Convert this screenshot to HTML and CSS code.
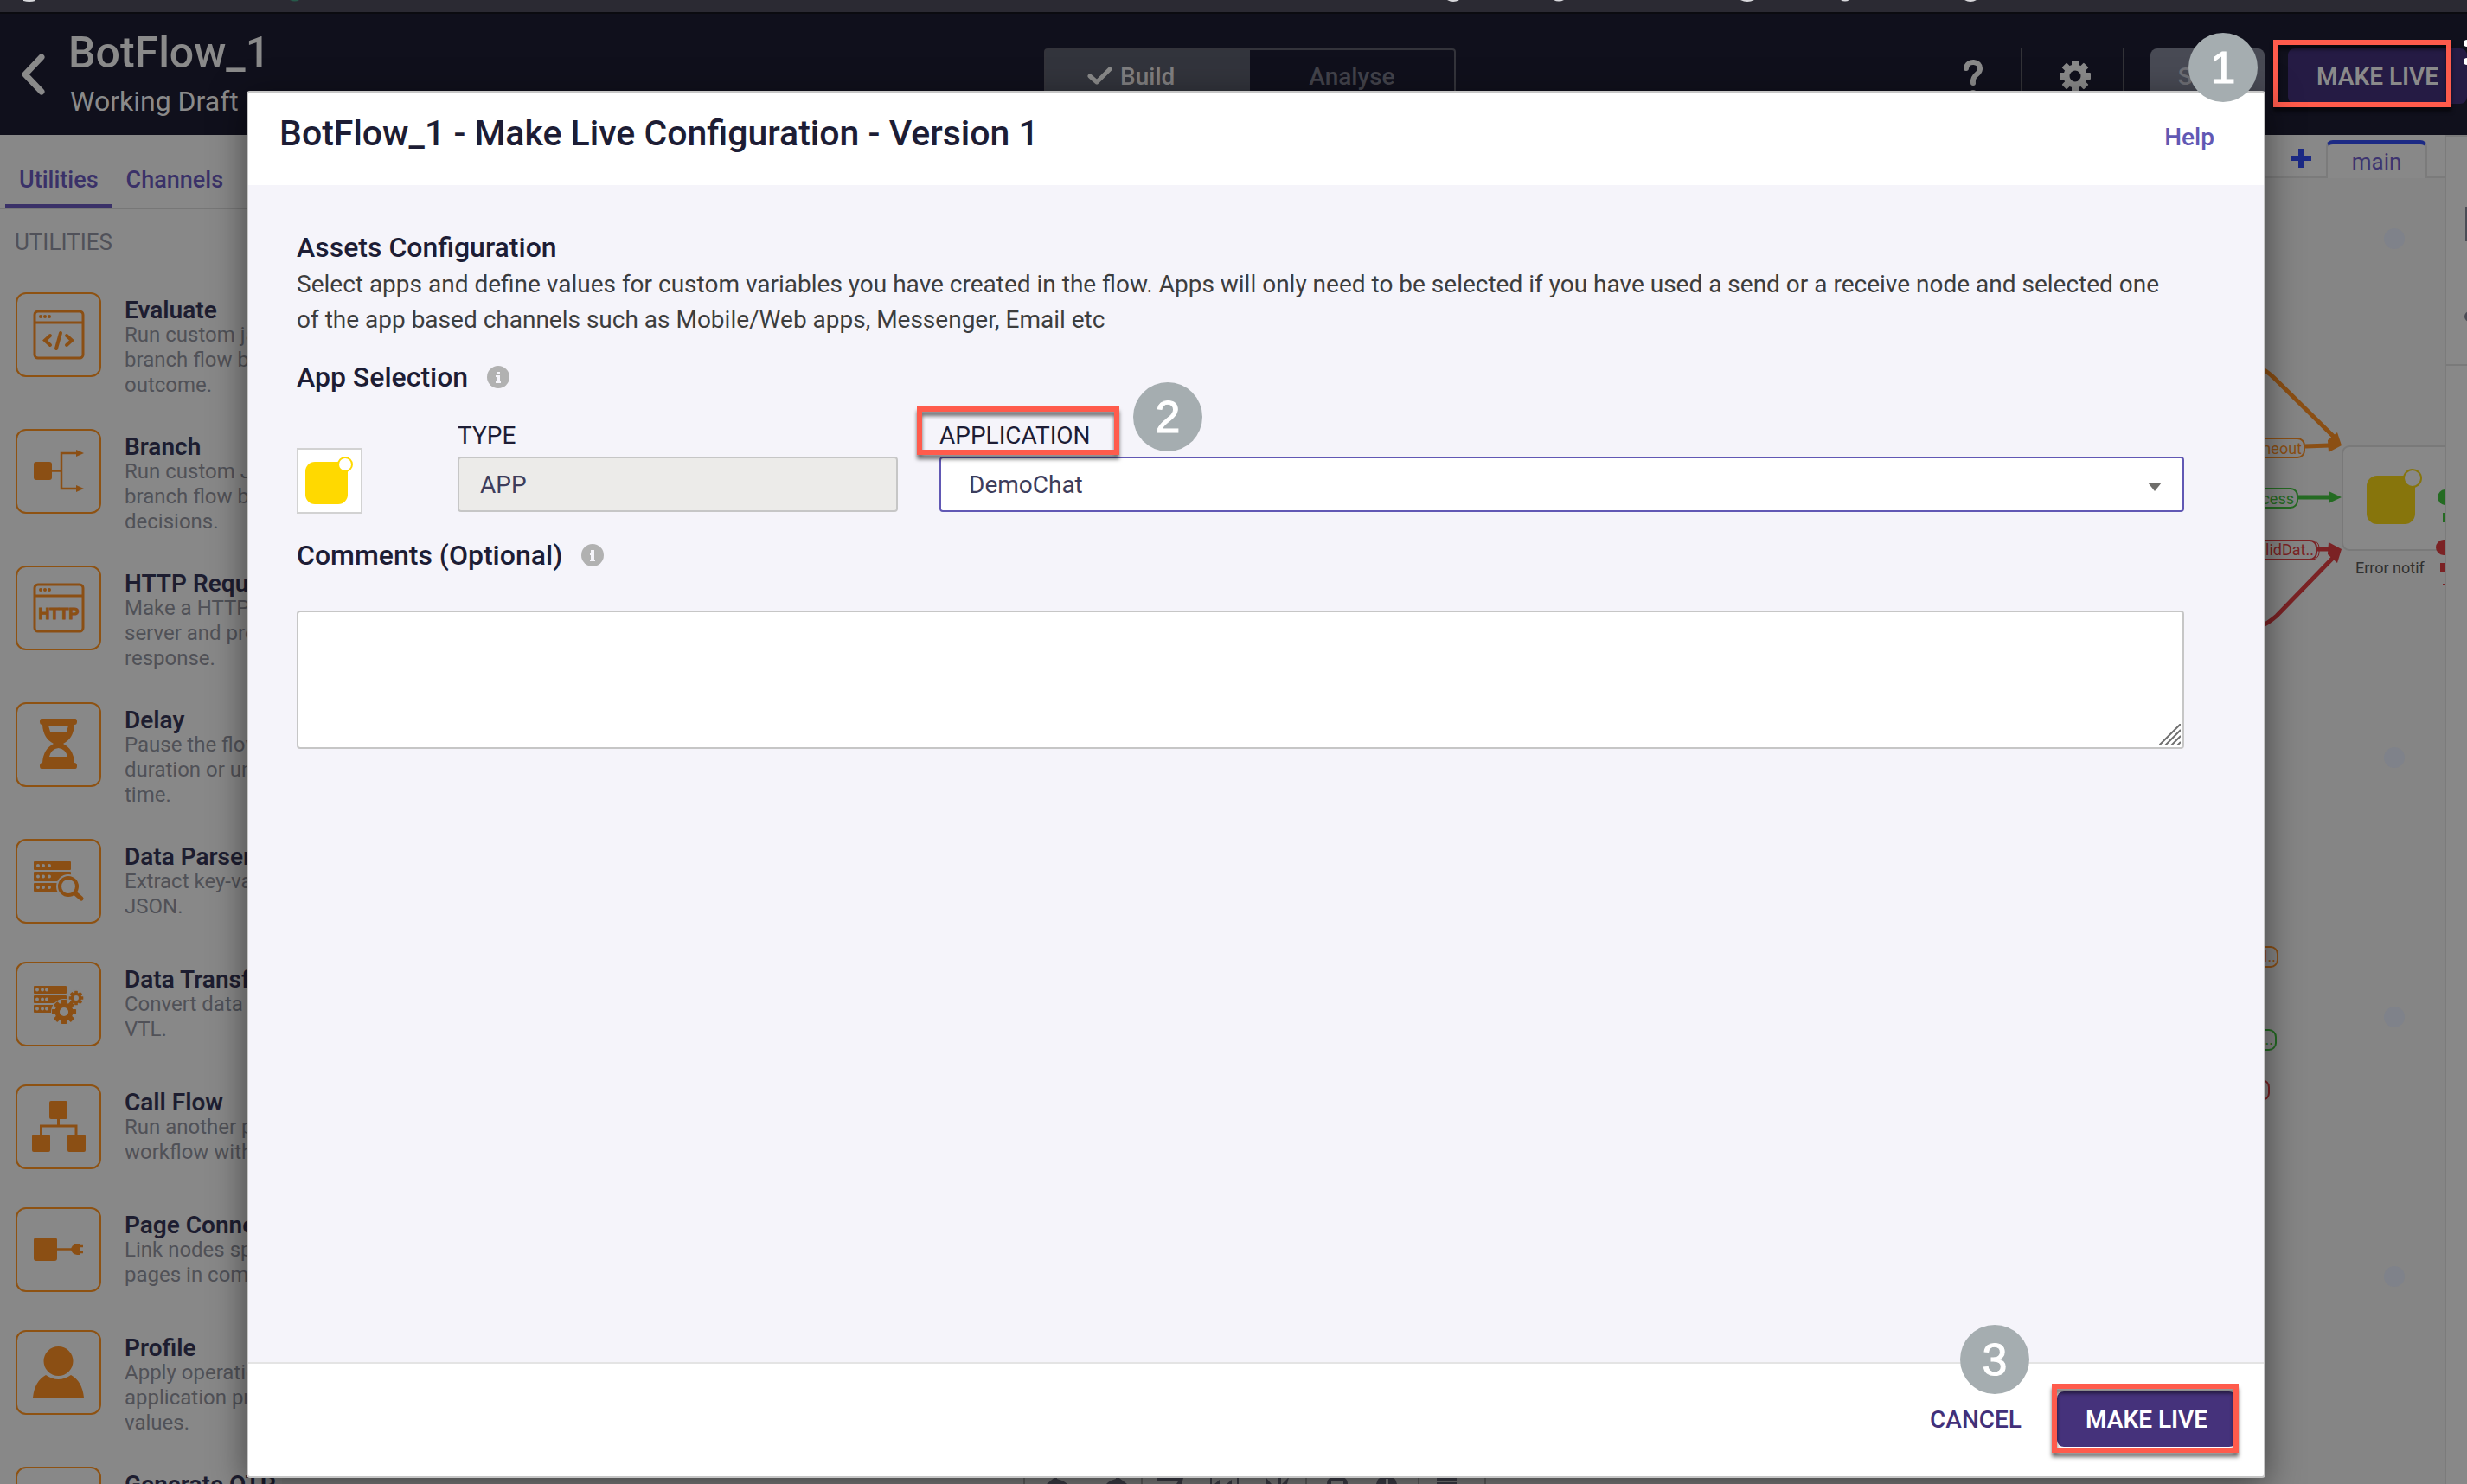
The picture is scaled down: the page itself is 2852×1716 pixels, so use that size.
FILE: index.html
```html
<!DOCTYPE html>
<html lang="en">
<head>
<meta charset="utf-8">
<meta name="viewport" content="width=device-width, initial-scale=1">
<title>BotFlow_1 - Make Live Configuration</title>
<link rel="stylesheet" href="styles.css">
</head>
<body>
<svg class="defs" aria-hidden="true">
  <defs>
    <g id="gear">
      <circle r="10" fill="none" stroke="currentColor" stroke-width="7"/>
      <g fill="currentColor">
        <rect x="-4" y="-18" width="8" height="7" rx="1"/>
        <rect x="-4" y="-18" width="8" height="7" rx="1" transform="rotate(45)"/>
        <rect x="-4" y="-18" width="8" height="7" rx="1" transform="rotate(90)"/>
        <rect x="-4" y="-18" width="8" height="7" rx="1" transform="rotate(135)"/>
        <rect x="-4" y="-18" width="8" height="7" rx="1" transform="rotate(180)"/>
        <rect x="-4" y="-18" width="8" height="7" rx="1" transform="rotate(225)"/>
        <rect x="-4" y="-18" width="8" height="7" rx="1" transform="rotate(270)"/>
        <rect x="-4" y="-18" width="8" height="7" rx="1" transform="rotate(315)"/>
      </g>
    </g>
    <g id="window">
      <rect x="22" y="22" width="56" height="54" rx="4" fill="none" stroke="currentColor" stroke-width="3"/>
      <path d="M22 35H78" stroke="currentColor" stroke-width="3"/>
      <g fill="currentColor"><circle cx="29" cy="28" r="2"/><circle cx="34" cy="28" r="2"/><circle cx="39" cy="28" r="2"/></g>
    </g>
    <g id="info">
      <circle cx="13" cy="13" r="13" fill="#b1b1b1"/>
      <path d="M11 7h4v3h-4zM10 11h5v7h1v2h-6v-2h1v-5h-1z" fill="#f5f4fa"/>
    </g>
  </defs>
</svg>

<div class="browser-edge">
  <svg class="edge-marks" viewBox="0 0 2852 14" preserveAspectRatio="xMinYMin" aria-hidden="true">
    <path d="M27 0h14v1q-7 2-14 0zM1673 0h14q-7 4-14 0zM1796 0h12q-6 3-12 0zM2012 0h16q-8 4-16 0zM2128 0h10q-5 3-10 0zM2271 0h14q-7 4-14 0z" fill="#d8d8dc"/>
    <path d="M335 0h11q-5 3-11 0z" fill="#27594a"/>
  </svg>
</div>

<header class="topbar">
  <div class="flow">
    <button class="back" type="button" aria-label="Back">
      <svg width="54" height="56" viewBox="0 0 54 56" aria-hidden="true"><path d="M48 9L29 29L48 49" fill="none" stroke="#8a8a8a" stroke-width="7" stroke-linecap="round" stroke-linejoin="round"/></svg>
    </button>
    <div class="flow-names">
      <p class="flow-name">BotFlow_1</p>
      <p class="flow-state">Working Draft</p>
    </div>
  </div>
  <div class="modes">
    <button class="mode mode-on" type="button">
      <svg width="30" height="22" viewBox="0 0 30 22" aria-hidden="true"><path d="M3 11L11 18L26 3" fill="none" stroke="#8a8a8a" stroke-width="5" stroke-linecap="round" stroke-linejoin="round"/></svg>
      Build
    </button>
    <button class="mode" type="button">Analyse</button>
  </div>
  <div class="tools">
    <button class="tool tool-help" type="button" aria-label="Help">
      <svg width="30" height="52" viewBox="0 0 30 52" aria-hidden="true"><path d="M7 13C8 3 24 4 23 14C22 21 14 20 15 30" fill="none" stroke="#8a8a8a" stroke-width="6" stroke-linecap="round"/><circle cx="15" cy="42" r="4" fill="#8a8a8a"/></svg>
    </button>
    <button class="tool" type="button" aria-label="Settings">
      <svg width="40" height="40" viewBox="-20 -20 40 40" color="#8a8a8a" aria-hidden="true"><use href="#gear"/></svg>
    </button>
    <div class="anchor save-anchor">
      <button class="save" type="button">SAVE</button>
    </div>
    <div class="anchor">
      <button class="live live-dim" type="button">MAKE LIVE</button>
      <span class="frame frame-top"></span>
    </div>
    <svg class="corner-mark" width="4" height="30" viewBox="0 0 4 30" aria-hidden="true"><circle cx="4" cy="4" r="4" fill="#fff"/><circle cx="4" cy="25" r="4" fill="#fff"/></svg>
  </div>
</header>

<div class="workspace">
  <aside class="sidebar">
    <nav class="side-tabs">
      <a class="side-tab side-tab-on" href="#utilities">Utilities</a>
      <a class="side-tab" href="#channels">Channels</a>
    </nav>
    <h2 class="group">UTILITIES</h2>
    <ul class="nodes">
      <li class="node">
        <span class="node-icon"><svg viewBox="2 2 95 94"><use href="#window"/><path d="M40 50L34 55.500L40 61M59 50L65 55.500L59 61M52 47L47 65" fill="none" stroke="currentColor" stroke-width="4" stroke-linecap="round"/></svg></span>
        <div class="node-text"><h3>Evaluate</h3><p>Run custom javascript<br>branch flow based<br>outcome.</p></div>
      </li>
      <li class="node">
        <span class="node-icon"><svg viewBox="2 2 95 94"><rect x="21" y="38" width="21" height="21" rx="3" fill="currentColor"/><path d="M42 48.500H53M72 28H53V69H72" fill="none" stroke="currentColor" stroke-width="2.500"/><path d="M70 24L79 28L70 32zM70 65L79 69L70 73z" fill="currentColor"/></svg></span>
        <div class="node-text"><h3>Branch</h3><p>Run custom Javascript<br>branch flow based<br>decisions.</p></div>
      </li>
      <li class="node">
        <span class="node-icon"><svg viewBox="2 2 95 94"><use href="#window"/><text class="http" x="50" y="62" text-anchor="middle">HTTP</text></svg></span>
        <div class="node-text"><h3>HTTP Request</h3><p>Make a HTTP<br>server and process<br>response.</p></div>
      </li>
      <li class="node">
        <span class="node-icon"><svg viewBox="2 2 95 94"><path fill="currentColor" fill-rule="evenodd" d="M30 19H69Q71 19 71 22.500Q71 26 68 26Q67 42 55 48Q67 54 68 70Q71 70 71 73.500Q71 77 69 77H30Q28 77 28 73.500Q28 70 31 70Q32 54 44 48Q32 42 31 26Q28 26 28 22.500Q28 19 30 19zM38 27L40 34H59L61 27zM39 63H60Q58 54 49.500 53Q41 54 39 63z"/></svg></span>
        <div class="node-text"><h3>Delay</h3><p>Pause the flow<br>duration or until<br>time.</p></div>
      </li>
      <li class="node">
        <span class="node-icon"><svg viewBox="2 2 95 94"><g fill="currentColor"><rect x="21" y="26" width="43" height="10" rx="1"/><rect x="21" y="38" width="43" height="11" rx="1"/><rect x="21" y="51" width="34" height="10" rx="1"/></g><g fill="#888"><circle cx="26" cy="31" r="2"/><circle cx="32" cy="31" r="2"/><circle cx="39" cy="31" r="2"/><circle cx="26" cy="43.500" r="2"/><circle cx="32" cy="43.500" r="2"/><circle cx="39" cy="43.500" r="2"/><circle cx="26" cy="56" r="2"/><circle cx="32" cy="56" r="2"/><circle cx="39" cy="56" r="2"/></g><circle cx="61" cy="55" r="14" fill="#888"/><circle cx="61" cy="55" r="10" fill="#888" stroke="currentColor" stroke-width="4"/><path d="M69 63L76 69" stroke="currentColor" stroke-width="5" stroke-linecap="round"/></svg></span>
        <div class="node-text"><h3>Data Parser</h3><p>Extract key-value<br>JSON.</p></div>
      </li>
      <li class="node">
        <span class="node-icon"><svg viewBox="2 2 95 94"><g fill="currentColor"><rect x="21" y="28" width="38" height="9" rx="1"/><rect x="21" y="39" width="38" height="9" rx="1"/><rect x="21" y="50" width="26" height="9" rx="1"/></g><g fill="#888"><circle cx="25" cy="32.500" r="2"/><circle cx="31" cy="32.500" r="2"/><circle cx="36" cy="32.500" r="2"/><circle cx="25" cy="43.500" r="2"/><circle cx="31" cy="43.500" r="2"/><circle cx="36" cy="43.500" r="2"/><circle cx="25" cy="54.500" r="2"/><circle cx="31" cy="54.500" r="2"/><circle cx="36" cy="54.500" r="2"/><circle cx="56" cy="58" r="15"/><circle cx="70" cy="42" r="10"/></g><use href="#gear" transform="translate(56 58) scale(.78)"/><use href="#gear" transform="translate(70 42) scale(.46)"/></svg></span>
        <div class="node-text"><h3>Data Transform</h3><p>Convert data<br>VTL.</p></div>
      </li>
      <li class="node">
        <span class="node-icon"><svg viewBox="2 2 95 94"><g fill="currentColor"><rect x="39" y="19" width="21" height="21" rx="2"/><rect x="19" y="58" width="21" height="20" rx="2"/><rect x="60" y="58" width="21" height="20" rx="2"/></g><path d="M49.500 40V48M29.500 58V48H70V58" fill="none" stroke="currentColor" stroke-width="3"/></svg></span>
        <div class="node-text"><h3>Call Flow</h3><p>Run another process<br>workflow within</p></div>
      </li>
      <li class="node">
        <span class="node-icon"><svg viewBox="2 2 95 94"><rect x="21" y="35" width="27" height="27" rx="3" fill="currentColor"/><path d="M48 48.500H66M73 45H78M73 52H78" stroke="currentColor" stroke-width="2.500"/><path d="M74 42V55H71Q65 54 64 48.500Q65 43 71 42z" fill="currentColor"/></svg></span>
        <div class="node-text"><h3>Page Connector</h3><p>Link nodes split<br>pages in complex</p></div>
      </li>
      <li class="node">
        <span class="node-icon"><svg viewBox="2 2 95 94"><g fill="currentColor"><circle cx="49.500" cy="36" r="17"/><path d="M20 78Q22 59 35 52Q49.500 62 64 52Q77 59 79 78z"/></g></svg></span>
        <div class="node-text"><h3>Profile</h3><p>Apply operations<br>application profile<br>values.</p></div>
      </li>
      <li class="node">
        <span class="node-icon"></span>
        <div class="node-text"><h3>Generate OTP</h3></div>
      </li>
    </ul>
  </aside>

  <section class="board">
    <div class="page-tabs">
      <button class="add-page" type="button" aria-label="Add page"><svg width="24" height="24" viewBox="0 0 24 24" aria-hidden="true"><path d="M9 1h6v8h9v6h-9v8h-6v-8H0v-6h9z" fill="#1c2a85"/></svg></button>
      <button class="page-tab" type="button">main</button>
    </div>
    <svg class="stage" width="2500" height="1510" viewBox="326 206 2500 1510" aria-hidden="true">
      <g fill="#7f828a"><circle cx="2768" cy="276" r="12"/><circle cx="2768" cy="876" r="12"/><circle cx="2768" cy="1176" r="12"/><circle cx="2768" cy="1476" r="12"/></g>
      <g fill="none" stroke="#8b4f14" stroke-width="5"><path d="M2610 424Q2620 428 2630 438L2700 507M2665 516L2693 515"/><rect x="2560" y="507" width="104" height="22" rx="8" stroke-width="2"/><rect x="2560" y="1095" width="73" height="23" rx="8" stroke-width="2"/></g>
      <path d="M2691 509L2702 500L2707 515L2692 523z" fill="#8b4f14"/>
      <g fill="none" stroke="#246b22" stroke-width="5"><path d="M2657 575H2693"/><rect x="2560" y="565" width="96" height="22" rx="8" stroke-width="2"/><rect x="2560" y="1191" width="71" height="23" rx="8" stroke-width="2"/></g>
      <path d="M2692 568L2707 575L2692 582z" fill="#246b22"/>
      <g fill="none" stroke="#7b2224" stroke-width="5"><path d="M2679 635H2693M2610 726Q2622 721 2632 712L2700 642"/><rect x="2560" y="625" width="118" height="22" rx="8" stroke-width="2"/><rect x="2560" y="625" width="121" height="22" rx="8" stroke-width="1"/><rect x="2560" y="1249" width="63" height="23" rx="8" stroke-width="2"/></g>
      <path d="M2692 627L2707 635L2702 651L2691 641z" fill="#7b2224"/>
      <g class="tag-text" text-anchor="end">
        <text x="2661" y="525" fill="#8b4f14">Timeout</text>
        <text x="2652" y="583" fill="#246b22">Success</text>
        <text x="2675" y="642" fill="#7b2224">InvalidDat..</text>
        <text x="2631" y="1112" fill="#8b4f14">Mail..</text>
        <text x="2628" y="1208" fill="#246b22">Suc..</text>
      </g>
      <rect x="2708" y="516" width="140" height="120" rx="8" fill="#888" stroke="#797979" stroke-width="2"/>
      <rect x="2736" y="550" width="56" height="56" rx="12" fill="#87750c"/>
      <circle cx="2789" cy="553" r="10" fill="#888" stroke="#87750c" stroke-width="2"/>
      <circle cx="2827" cy="575" r="9" fill="#246b22"/><path d="M2824 593h2v11h-2z" fill="#246b22"/>
      <circle cx="2825" cy="633" r="9" fill="#7b2224"/><path d="M2821 651h5v11h-5zM2824 675h2v2h-2z" fill="#7b2224"/>
      <text class="tag-text" x="2723" y="663" fill="#303030">Error notif</text>
      <g fill="none" stroke="#666" stroke-width="2"><path d="M1184 1700V1716M1320 1700V1716M1510 1700V1716M1640 1700V1716M1717 1700V1716"/></g>
      <g fill="#41414b"><path d="M1210 1716L1222 1706V1710Q1230 1712 1234 1716zM1303 1716L1290 1706V1710Q1282 1712 1279 1716zM1338 1709H1368L1366 1716H1360L1362 1713H1338zM1463 1708L1470 1716H1464zM1478 1708H1481V1716H1478zM1490 1708L1482 1716H1488zM1534 1716Q1534 1707 1546 1707Q1558 1707 1558 1716H1553V1713H1539V1716zM1591 1716Q1592 1708 1603 1706Q1614 1708 1615 1716H1605V1710H1602V1716zM1661 1709H1684V1712H1661zM1661 1714H1684V1716H1661z"/><path d="M1399 1708h2v8h-2zM1430 1708h2v8h-2zM1404 1716l6-5v5zM1418 1716l6-5v5z"/></g>
    </svg>
  </section>

  <aside class="rail">
    <svg class="rail-marks" width="24" height="270" viewBox="0 0 24 270" aria-hidden="true"><path d="M24 81H22V121H24z" fill="#4a4c55"/><circle cx="27" cy="208" r="6" fill="#4a4c55"/><path d="M0 263H24V265H0z" fill="#7a7a7a"/></svg>
  </aside>
</div>

<div class="overlay">
  <form class="dialog" role="dialog" aria-labelledby="dialog-title">
    <span class="step step-one">1</span>
    <div class="dialog-head">
      <h1 id="dialog-title">BotFlow_1 - Make Live Configuration - Version 1</h1>
      <a class="help" href="#help">Help</a>
    </div>
    <div class="dialog-body">
      <h2 class="section">Assets Configuration</h2>
      <p class="intro">Select apps and define values for custom variables you have created in the flow. Apps will only need to be selected if you have used a send or a receive node and selected one of the app based channels such as Mobile/Web apps, Messenger, Email etc</p>
      <h2 class="section section-apps">App Selection <svg class="info" width="26" height="26" aria-hidden="true"><use href="#info"/></svg></h2>
      <div class="app-row">
        <span class="app-icon"><svg width="72" height="72" viewBox="0 0 72 72" aria-hidden="true"><rect x="8" y="14" width="49" height="49" rx="11" fill="#ffd900"/><circle cx="54" cy="17" r="8" fill="#fff" stroke="#ffd900" stroke-width="2"/></svg></span>
        <div class="field">
          <label for="type">TYPE</label>
          <input id="type" class="control" type="text" value="APP" disabled>
        </div>
        <div class="field">
          <div class="anchor label-line">
            <label for="application">APPLICATION</label>
            <span class="frame frame-label"></span>
            <span class="step step-two">2</span>
          </div>
          <div class="anchor">
            <select id="application" class="control control-select"><option>DemoChat</option></select>
            <svg class="caret" width="16" height="10" viewBox="0 0 16 10" aria-hidden="true"><path d="M0 0H16L8 10z" fill="#6f6e6b"/></svg>
          </div>
        </div>
      </div>
      <label class="section section-comments" for="comments">Comments (Optional) <svg class="info" width="26" height="26" aria-hidden="true"><use href="#info"/></svg></label>
      <div class="anchor comments-box">
        <textarea id="comments" class="comments"></textarea>
        <svg class="grip" width="25" height="25" viewBox="0 0 25 25" aria-hidden="true"><path d="M0 25L25 0M7 25L25 7M14 25L25 14M21 25L25 21" stroke="#707070" stroke-width="2"/></svg>
      </div>
    </div>
    <div class="dialog-foot">
      <button class="cancel" type="button">CANCEL</button>
      <div class="anchor">
        <button class="live" type="submit">MAKE LIVE</button>
        <span class="frame frame-foot"></span>
        <span class="step step-three">3</span>
      </div>
    </div>
  </form>
</div>
</body>
</html>
```
FILE: styles.css
```css
* { box-sizing: border-box; }

body {
  margin: 0;
  height: 100vh;
  display: flex;
  flex-direction: column;
  position: relative;
  overflow: hidden;
  background: #858585;
  font-family: Roboto, "Liberation Sans", sans-serif;
  font-size: 28px;
  color: #1d1d35;
}

h1, h2, h3, p, ul { margin: 0; padding: 0; font-weight: 400; }
ul { list-style: none; }
a { text-decoration: none; }
svg { display: block; flex: none; }
button { border: 0; padding: 0; background: none; font: inherit; color: inherit; }
.defs { position: absolute; width: 0; height: 0; }
.anchor { position: relative; }

/* Browser edge and top bar */
.browser-edge { flex: none; height: 16px; background: #2b2a33; border-bottom: 2px solid #0b0b10; }
.edge-marks { width: 100%; height: 14px; }

.topbar {
  flex: none;
  height: 140px;
  display: grid;
  grid-template-columns: 1207fr 476px 1169fr;
  align-items: start;
  background: #10101c;
  color: #8a8a8a;
}
.flow { display: flex; align-items: flex-start; gap: 25px; }
.back { margin-top: 41px; }
.flow-names { padding-top: 15px; }
.flow-name { font-size: 50px; font-weight: 500; line-height: 60px; }
.flow-state { font-size: 32px; line-height: 52px; padding-left: 2px; }

.modes {
  margin-top: 40px;
  height: 64px;
  display: grid;
  grid-template-columns: 1fr 1fr;
  border: 2px solid #34343b;
  border-radius: 4px;
}
.mode { font-weight: 500; color: #43434b; }
.mode-on {
  display: flex;
  align-items: center;
  padding-left: 48px;
  gap: 8px;
  background: #32343c;
  color: #807f80;
}

.tools { display: flex; justify-content: flex-end; padding-top: 40px; position: relative; }
.tool { width: 118px; height: 64px; display: flex; align-items: center; justify-content: center; padding-left: 6px; border-right: 2px solid #333338; }
.tool-help { padding-top: 8px; }
.save-anchor { padding: 0 27px 0 30px; }
.save { width: 132px; height: 64px; border-radius: 8px; background: #484a54; color: #6f7076; font-weight: 500; }
.live { width: 207px; height: 64px; border-radius: 8px; background: #45327b; color: #fff; font-weight: 600; }
.live-dim { background: #251b44; color: #8a8a8a; }
.corner-mark { position: absolute; right: 0; top: 30px; }

/* Numbered callouts */
.frame {
  position: absolute;
  border: 6px solid #ff5b4c;
  filter: drop-shadow(0 5px 2px rgba(0, 0, 0, .55));
  pointer-events: none;
}
.frame-top { left: -17px; right: 18px; top: -10px; height: 78px; }
.frame-label { left: -26px; top: -14px; width: 234px; height: 56px; z-index: 1; }
.frame-foot { left: -6px; right: -3px; top: -9px; height: 80px; }
.step {
  position: absolute;
  width: 80px;
  height: 80px;
  border-radius: 50%;
  background: #a5adb0;
  color: #fff;
  font: 52px/80px "Liberation Sans", Arial, sans-serif;
  -webkit-text-stroke: 1px #fff;
  text-align: center;
}
.step-one { right: 7px; top: -69px; }
.step-two { left: 224px; top: -42px; }
.step-three { left: -112px; top: -77px; }

/* Workspace */
.workspace { flex: 1; min-height: 0; display: grid; grid-template-columns: 326px 1fr 26px; }
.sidebar { background: #888; overflow: hidden; }
.side-tabs { display: flex; height: 86px; padding: 0 6px; font-size: 27px; border-bottom: 2px solid #777; }
.side-tab { padding: 36px 16px 0; line-height: 32px; font-weight: 500; color: #3a3168; }
.side-tab-on { border-bottom: 4px solid #3a3168; }
.group { padding: 22px 17px; line-height: 32px; font-size: 26px; color: #505159; }
.nodes { padding: 20px 18px 0; }
.node { display: flex; gap: 27px; min-height: 106px; margin-bottom: 36px; }
.node-icon { flex: none; width: 99px; height: 98px; border: 2px solid #8e5212; border-radius: 12px; color: #8b4f14; }
.node-text { padding-top: 6px; white-space: nowrap; line-height: 29px; }
.node-text h3 { font-size: 28px; font-weight: 600; color: #1d1d30; }
.node-text p { font-size: 24px; color: #505157; }
.http { font: 900 18px "Liberation Sans", Arial, sans-serif; fill: currentColor; stroke: currentColor; }

.board { position: relative; overflow: hidden; background: #858585; }
.page-tabs { display: flex; justify-content: flex-end; height: 50px; padding: 6px 20px 0 0; gap: 17px; background: #888; border-bottom: 2px solid #7b7b7b; }
.add-page { display: flex; align-items: center; }
.page-tab {
  width: 117px;
  height: 44px;
  border: 2px solid #7b7b7b;
  border-top: 5px solid #1c2a85;
  border-bottom: 0;
  border-radius: 8px 8px 0 0;
  background: #888;
  font-size: 26px;
  color: #3d3470;
}
.stage { position: absolute; right: 0; top: 50px; }
.tag-text { font-size: 18px; }
.rail { border: 2px solid #7b7b7b; border-width: 2px 0 0 2px; background: #888; }

/* Dialog */
.overlay { position: absolute; inset: 0; display: flex; padding: 105px 233px 7px 285px; }
.dialog {
  position: relative;
  flex: 1;
  min-width: 0;
  display: flex;
  flex-direction: column;
  border: 2px solid #c6c6c6;
  border-radius: 4px;
  background: #fff;
  box-shadow: 0 10px 40px rgba(0, 0, 0, .5);
}
.dialog-head { display: flex; align-items: baseline; justify-content: space-between; height: 107px; padding: 23px 57px 0 36px; }
.dialog-head h1 { font-size: 41px; line-height: 48px; font-weight: 500; }
.help { font-weight: 500; color: #6158b4; }

.dialog-body { flex: 1; padding: 50px 92px 0 56px; background: #f5f4fa; border-bottom: 2px solid #e4e4e4; }
.section { display: flex; align-items: center; gap: 22px; font-size: 32px; font-weight: 500; line-height: 44px; }
.section-apps { margin: 24px 0 26px; }
.section-comments { margin: 26px 0 42px; }
.intro { line-height: 41px; color: #3d3d3d; }

.app-row { display: grid; grid-template-columns: 138px 509fr 1439fr; gap: 48px; align-items: end; }
.app-icon { width: 76px; height: 76px; border: 2px solid #d2d2d2; background: #fff; }
.field { padding-bottom: 2px; }
.field label { display: block; line-height: 40px; margin-bottom: 4px; }
.label-line { width: max-content; }
.control {
  display: block;
  width: 100%;
  height: 64px;
  padding: 0 24px;
  border: 2px solid #c6c6c6;
  border-radius: 4px;
  background: #ecebe9;
  font: inherit;
  color: #3d3d5c;
  appearance: none;
}
.control-select { padding: 0 32px; background: #fff; border-color: #6158b4; }
.caret { position: absolute; right: 26px; top: 30px; pointer-events: none; }
.comments { display: block; width: 100%; height: 160px; border: 2px solid #c6c6c6; border-radius: 4px; background: #fff; font: inherit; resize: none; }
.grip { position: absolute; right: 4px; bottom: 4px; pointer-events: none; }

.dialog-foot { display: flex; justify-content: flex-end; align-items: flex-start; gap: 41px; height: 130px; padding: 32px 32px 0; }
.cancel { height: 64px; font-weight: 500; color: #42307a; }
```
